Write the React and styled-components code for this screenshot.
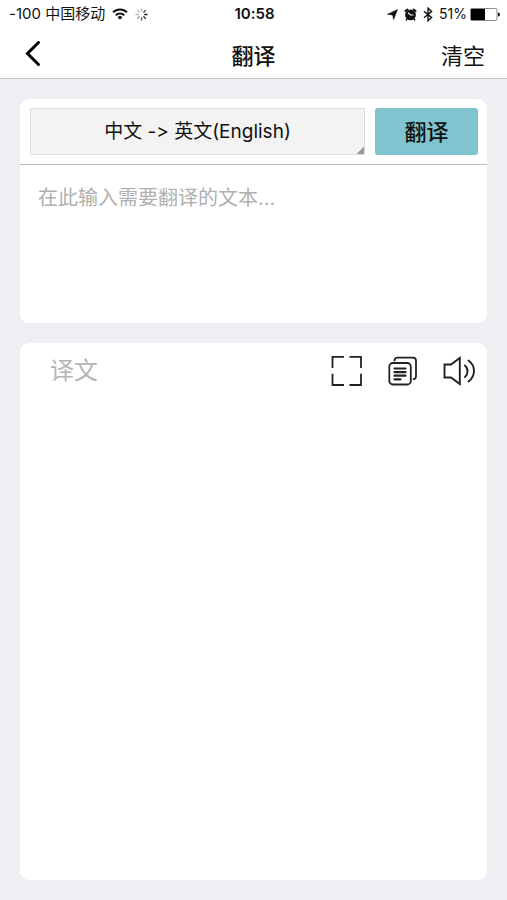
import React, { useState } from "react";
import styled, { createGlobalStyle } from "styled-components";

const GlobalStyle = createGlobalStyle`
  * {
    box-sizing: border-box;
  }
  body {
    margin: 0;
    background: #efeef3;
  }
  body,
  button,
  select,
  textarea {
    font-family: Inter, "Noto Sans CJK SC", sans-serif;
    font-feature-settings: "calt" 0;
  }
`;
const Page = styled.div`
  display: flex;
  flex-direction: column;
  min-height: 100vh;
  color: #111;
`;
const Header = styled.header`
  background: white;
  border-bottom: 1px solid #c4c4c6;
`;
const StatusBar = styled.div`
  display: grid;
  grid-template-columns: 1fr auto 1fr;
  align-items: center;
  height: 28px;
  padding: 0 7px 0 9px;
  font-size: 14px;
  line-height: 20px;
`;
const StatusGroup = styled.div`
  display: flex;
  align-items: center;
  justify-content: ${(props) => (props.$end ? "flex-end" : "flex-start")};
  gap: ${(props) => (props.$end ? 6 : 7)}px;
`;
const Battery = styled.span`
  display: flex;
  align-items: center;
  gap: 3px;
`;
const Carrier = styled.span`
  font-size: 15px;
  white-space: nowrap;
`;
const Clock = styled.span`
  font-size: 15px;
  font-weight: 600;
`;
const NavBar = styled.nav`
  display: grid;
  grid-template-columns: 1fr auto 1fr;
  align-items: center;
  height: 50px;
  padding: 5px 22px 0;
`;
const Title = styled.h1`
  margin: 0;
  font-size: 22px;
  font-weight: 500;
  line-height: 32px;
`;
const PlainButton = styled.button`
  display: flex;
  padding: 0;
  border: none;
  background: none;
  color: inherit;
  font-size: 22px;
  line-height: 32px;
  cursor: pointer;
  justify-self: ${(props) => (props.$end ? "end" : "start")};
`;
const Content = styled.main`
  display: flex;
  flex: 1;
  flex-direction: column;
  gap: 20px;
  padding: 20px;
`;
const Card = styled.section`
  display: flex;
  flex-direction: column;
  flex: ${(props) => (props.$grow ? 1 : "none")};
  overflow: hidden;
  border-radius: 9px;
  background: white;
`;
const Toolbar = styled.div`
  display: flex;
  gap: 10px;
  padding: 9px 9px 9px 10px;
  border-bottom: 1px solid #bbb;
`;
const LanguageSelect = styled.select`
  flex: 1;
  min-width: 0;
  height: 47px;
  padding: 0;
  border: 1px solid #dedede;
  border-radius: 0;
  appearance: none;
  background: linear-gradient(135deg, transparent 50%, #999 50%) right bottom / 7px 7px no-repeat #f3f3f3;
  color: #111;
  font-size: 19px;
  text-align: center;
  text-align-last: center;
`;
const TranslateButton = styled.button`
  width: 103px;
  height: 47px;
  padding: 0 0 4px;
  border: none;
  border-radius: 3px;
  background: #7fc4cf;
  color: #111;
  font-size: 22px;
  font-weight: 500;
  cursor: pointer;
`;
const SourceInput = styled.textarea`
  display: block;
  width: 100%;
  height: 158px;
  padding: 18px;
  border: none;
  outline: none;
  resize: none;
  color: #111;
  font-size: 20px;
  line-height: 30px;
  &::placeholder {
    color: #b0b0b0;
  }
`;
const ResultHeader = styled.div`
  display: flex;
  align-items: center;
  justify-content: space-between;
  padding: 10px 10px 10px 30px;
`;
const ResultTitle = styled.h2`
  margin: 0;
  color: #b5b5b5;
  font-size: 24px;
  font-weight: 400;
  line-height: 36px;
`;
const Actions = styled.div`
  display: flex;
  gap: 24px;
`;

const WifiIcon = () => (
  <svg width="16" height="12" viewBox="0 0 16 12" fill="none" stroke="#111" strokeWidth="2">
    <path d="M1 4.3a10 10 0 0 1 14 0M3.7 7.2a6.2 6.2 0 0 1 8.6 0" />
    <path d="M5.6 9.2a3.5 3.5 0 0 1 4.8 0L8 11.8z" fill="#111" stroke="none" />
  </svg>
);
const SpinnerIcon = () => (
  <svg width="13" height="13" viewBox="0 0 13 13" stroke="#111" strokeWidth="1.4" strokeLinecap="round">
    {[0.25, 0.7, 0.95, 0.85, 0.65, 0.4, 0.3, 0.25].map((opacity, i) => (
      <path key={i} d="M6.5 1v2.2" opacity={opacity} transform={`rotate(${i * 45} 6.5 6.5)`} />
    ))}
  </svg>
);
const LocationIcon = () => (
  <svg width="11" height="11" viewBox="0 0 11 11">
    <path d="M10.6.5 6.6 10.5 5.6 6 .4 5.3z" fill="#111" stroke="#111" strokeWidth=".5" />
  </svg>
);
const AlarmIcon = () => (
  <svg width="13" height="13" viewBox="0 0 13 13" fill="none" stroke="#111" strokeLinecap="round">
    <circle cx="6.5" cy="6.9" r="5.4" fill="#111" stroke="none" />
    <path d="M1.4 3 3.4 1.5M11.6 3 9.600 1.5" strokeWidth="2" />
    <path d="m3 11-.8 1M10 11l.8 1" strokeWidth="1.3" />
    <path d="M4.400 5 6.5 7H9" stroke="white" strokeWidth="1.1" />
  </svg>
);
const BluetoothIcon = () => (
  <svg width="10" height="15" viewBox="0 0 10 15" fill="none" stroke="#111" strokeWidth="1.4">
    <path d="m1 4.2 7.6 6.4L5 13.8V1.2l3.6 3.2L1 10.8" />
  </svg>
);
const BatteryIcon = () => (
  <svg width="30" height="13" viewBox="0 0 30 13">
    <rect x=".5" y=".5" width="26.5" height="12" rx="1.5" fill="white" stroke="#888" />
    <rect x="1" y="1" width="14" height="11" fill="#000" />
    <path d="M28 4.5a2 2 0 0 1 0 4z" fill="#111" />
  </svg>
);
const BackIcon = () => (
  <svg width="20" height="32" viewBox="0 0 20 32" fill="none" stroke="#000" strokeWidth="3" strokeLinecap="round">
    <path d="M16.5 2.500 5.500 13.500 16.5 24.500" />
  </svg>
);
const ExpandIcon = () => (
  <svg width="32" height="32" viewBox="0 0 32 32" fill="none" stroke="#222" strokeWidth="1.8">
    <path d="M1.500 13V1.800h11.500M18.500 1.800h11.500V13M30 18.700v11.300H18.500M13 30H1.500V18.700" />
  </svg>
);
const CopyIcon = () => (
  <svg width="32" height="32" viewBox="0 0 32 32" fill="none" stroke="#222" strokeWidth="1.8" strokeLinecap="round">
    <rect x="2.300" y="8" width="21.500" height="21.500" rx="3.500" />
    <path d="M7.500 5.500C7.500 3.500 8.500 2.600 10.500 2.600H26c2 0 3 1 3 3V21c0 2-.8 3-2.500 3.200" />
    <path d="M7.500 13.500h11M7.500 17.100h11M7.500 20.700h11M7.500 24.300h6" strokeWidth="2.200" />
  </svg>
);
const SpeakerIcon = () => (
  <svg width="34" height="32" viewBox="0 0 34 32" fill="none" stroke="#222" strokeWidth="1.9" strokeLinecap="round">
    <path d="M1.500 9.500h6.500L16.800 3v26L8 22.500H1.500z" />
    <path d="M22 10.500c3.400 3 3.400 8.500 0 11.500M25.500 5.500c7.300 5.400 7.300 15.600 0 21" />
  </svg>
);

const App = () => {
  const [text, setText] = useState("");

  return (
    <Page>
      <GlobalStyle />
      <Header>
        <StatusBar>
          <StatusGroup>
            <Carrier>-100 中国移动</Carrier>
            <WifiIcon />
            <SpinnerIcon />
          </StatusGroup>
          <Clock>10:58</Clock>
          <StatusGroup $end>
            <LocationIcon />
            <AlarmIcon />
            <BluetoothIcon />
            <Battery>
              <span>51%</span>
              <BatteryIcon />
            </Battery>
          </StatusGroup>
        </StatusBar>
        <NavBar>
          <PlainButton type="button" aria-label="返回">
            <BackIcon />
          </PlainButton>
          <Title>翻译</Title>
          <PlainButton type="button" $end onClick={() => setText("")}>
            清空
          </PlainButton>
        </NavBar>
      </Header>
      <Content>
        <Card>
          <Toolbar>
            <LanguageSelect aria-label="语言">
              <option>中文 -&gt; 英文(English)</option>
            </LanguageSelect>
            <TranslateButton type="button">翻译</TranslateButton>
          </Toolbar>
          <SourceInput
            aria-label="原文"
            placeholder="在此输入需要翻译的文本..."
            value={text}
            onChange={(e) => setText(e.target.value)}
          />
        </Card>
        <Card $grow>
          <ResultHeader>
            <ResultTitle>译文</ResultTitle>
            <Actions>
              <PlainButton type="button" aria-label="全屏">
                <ExpandIcon />
              </PlainButton>
              <PlainButton type="button" aria-label="复制">
                <CopyIcon />
              </PlainButton>
              <PlainButton type="button" aria-label="朗读">
                <SpeakerIcon />
              </PlainButton>
            </Actions>
          </ResultHeader>
        </Card>
      </Content>
    </Page>
  );
};
export default App;
